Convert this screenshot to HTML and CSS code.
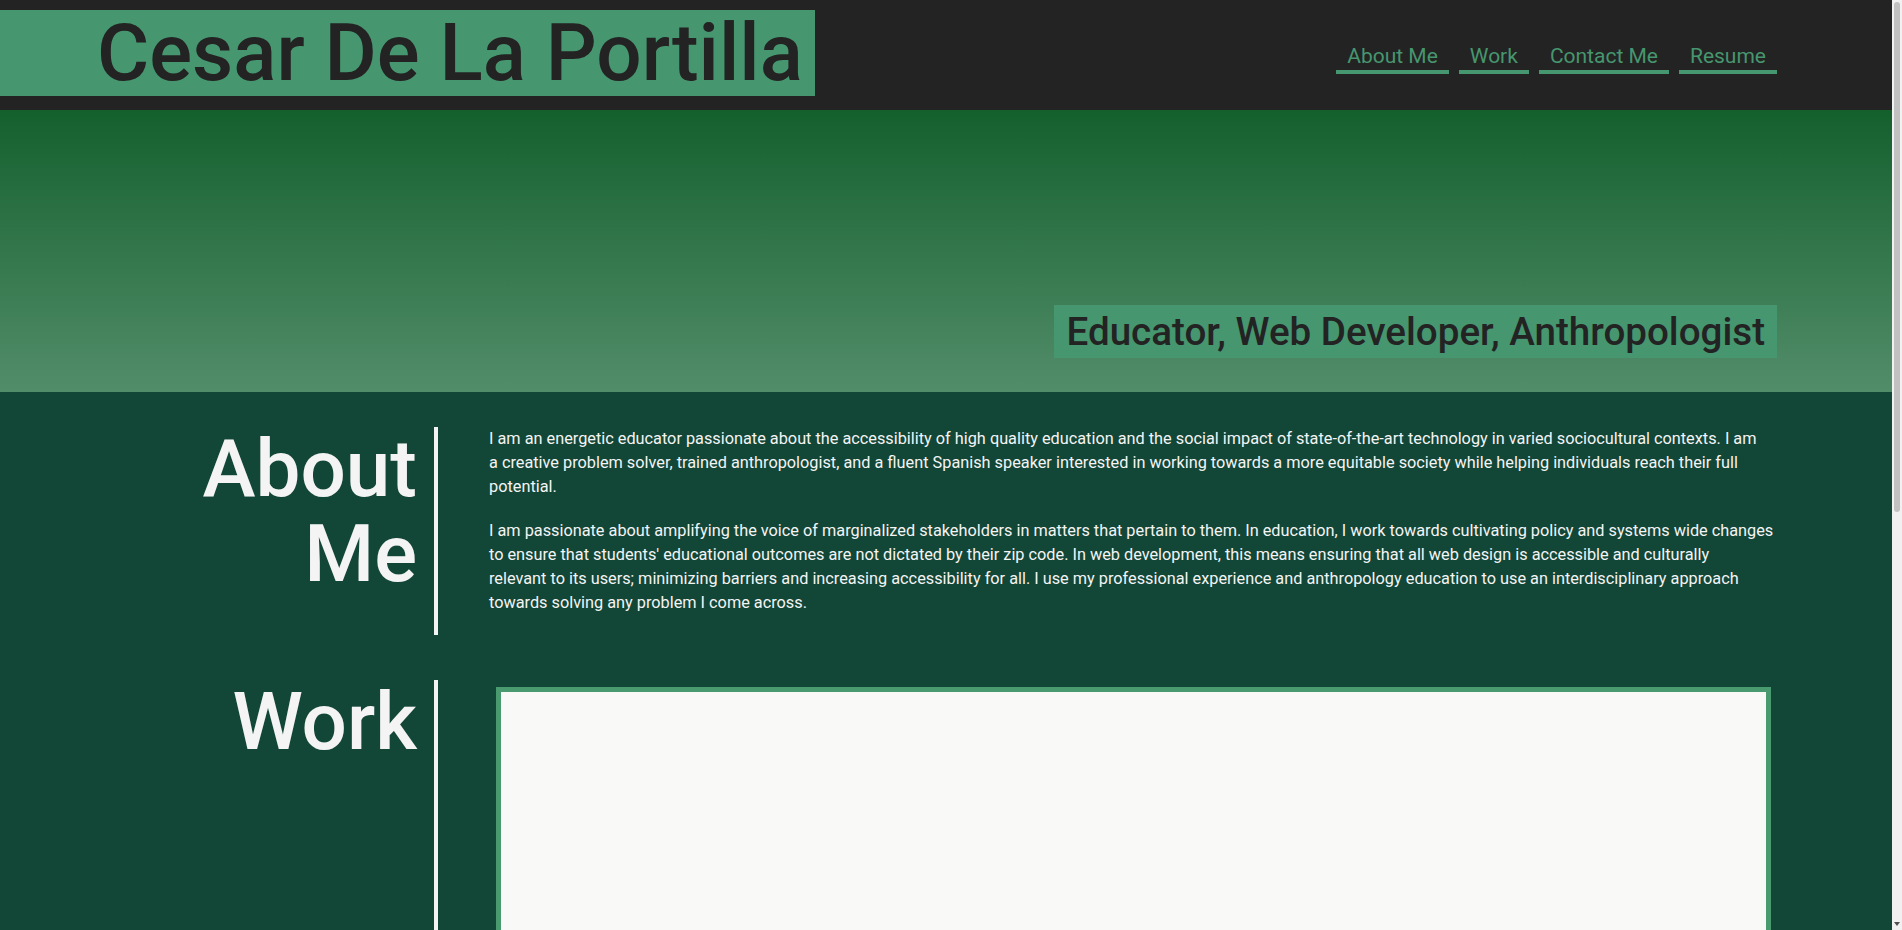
FILE: index.html
```html
<!DOCTYPE html>
<html lang="en">
<head>
<meta charset="utf-8">
<title>Cesar De La Portilla</title>
<link rel="stylesheet" href="styles.css">
</head>
<body>
<header class="site-header">
  <h1 class="site-title">Cesar De La Portilla</h1>
  <nav class="site-nav">
    <a href="#about" class="nav-link">About Me</a>
    <a href="#work" class="nav-link">Work</a>
    <a href="#contact" class="nav-link">Contact Me</a>
    <a href="#resume" class="nav-link">Resume</a>
  </nav>
</header>
<section class="hero">
  <h2 class="hero-tagline">Educator, Web Developer, Anthropologist</h2>
</section>
<main class="content">
  <section class="row" id="about">
    <h2 class="row-title">About Me</h2>
    <div class="row-body">
      <p>I am an energetic educator passionate about the accessibility of high quality education and the social impact of state-of-the-art technology in varied sociocultural contexts. I am<br>
      a creative problem solver, trained anthropologist, and a fluent Spanish speaker interested in working towards a more equitable society while helping individuals reach their full<br>
      potential.</p>
      <p>I am passionate about amplifying the voice of marginalized stakeholders in matters that pertain to them. In education, I work towards cultivating policy and systems wide changes<br>
      to ensure that students' educational outcomes are not dictated by their zip code. In web development, this means ensuring that all web design is accessible and culturally<br>
      relevant to its users; minimizing barriers and increasing accessibility for all. I use my professional experience and anthropology education to use an interdisciplinary approach<br>
      towards solving any problem I come across.</p>
    </div>
  </section>
  <section class="row" id="work">
    <h2 class="row-title">Work</h2>
    <div class="row-body">
      <div class="work-card"></div>
    </div>
  </section>
</main>
<div class="scrollbar" aria-hidden="true"><div class="scrollbar-thumb"></div><div class="scrollbar-arrow"></div></div>
</body>
</html>
```
FILE: styles.css
```css
* { box-sizing: border-box; }

body {
  margin: 0;
  background: #124637;
  font-family: Roboto, "Liberation Sans", sans-serif;
  color: #f4f4f4;
}

.site-header {
  display: flex;
  justify-content: space-between;
  align-items: flex-start;
  height: 110px;
  background: #232323;
}

.site-title {
  margin: 10px 0 0;
  height: 86px;
  padding: 0 12px 0 97px;
  background: #46966f;
  color: #232323;
  font-size: 80px;
  font-weight: 500;
  line-height: 86px;
  white-space: nowrap;
}

.site-nav {
  display: flex;
  gap: 10px;
  margin: 42px 125px 0 0;
}

.nav-link {
  display: block;
  padding: 0 11px;
  color: #46966f;
  font-size: 21px;
  line-height: 28px;
  text-decoration: none;
  border-bottom: 4px solid #46966f;
}

.hero {
  display: flex;
  justify-content: flex-end;
  align-items: flex-start;
  height: 282px;
  padding: 195px 125px 0 0;
  background: linear-gradient(#14602d, #528d6a);
}

.hero-tagline {
  margin: 0;
  height: 53px;
  padding: 0 12px;
  background: #46966f;
  color: #232323;
  font-size: 38.6px;
  font-weight: 500;
  line-height: 53px;
  white-space: nowrap;
}

.content {
  padding: 35px 125px 0 108px;
}

.row {
  display: grid;
  grid-template-columns: 330px 1fr;
  margin-bottom: 45px;
}

.row-title {
  margin: 0;
  padding: 0 17px 0 0;
  border-right: 4px solid #f4f4f4;
  text-align: right;
  font-size: 80px;
  font-weight: 500;
  line-height: 85px;
  color: #f4f4f4;
}

.row-body {
  padding: 0 0 0 51px;
}

.row-body p {
  margin: 0 0 20px;
  font-size: 16.3px;
  line-height: 24px;
  white-space: nowrap;
}

.work-card {
  margin: 7px 6px 0 7px;
  height: 520px;
  border: 5px solid #4a9a70;
  background: #f9f9f7;
}

.scrollbar {
  position: fixed;
  top: 0;
  right: 0;
  width: 10px;
  height: 100vh;
  background: #f1f1f1;
}

.scrollbar-thumb {
  margin: 2px 2px 0;
  height: 510px;
  border-radius: 3px;
  background: #c1c1c1;
}

.scrollbar-arrow {
  position: absolute;
  bottom: 4px;
  left: 2px;
  border-left: 3px solid transparent;
  border-right: 3px solid transparent;
  border-top: 4px solid #505050;
}
```
